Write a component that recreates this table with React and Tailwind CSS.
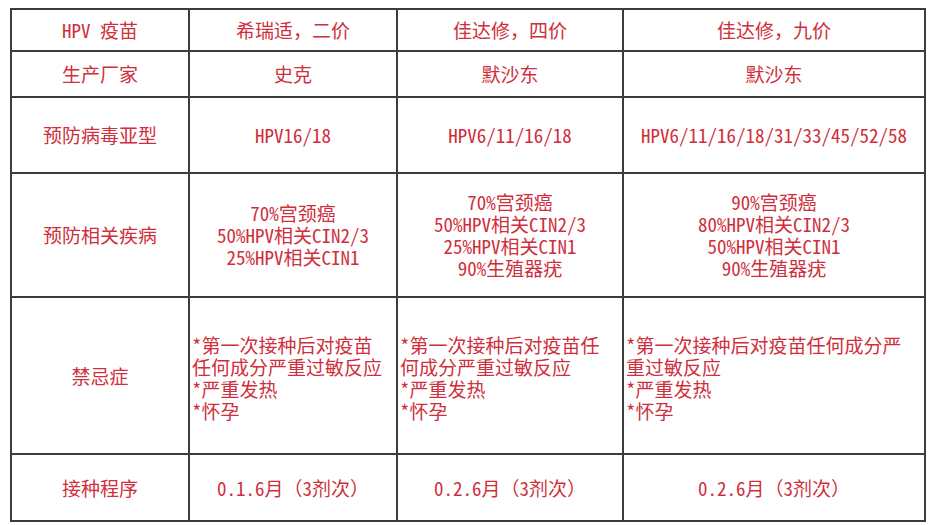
import React from 'react';

const font = {
  fontFamily: '"Noto Sans Mono CJK SC", "Liberation Mono", "Noto Sans CJK SC", monospace',
};

const rows = [
  { label: 'HPV 疫苗', cells: ['希瑞适，二价', '佳达修，四价', '佳达修，九价'] },
  { label: '生产厂家', cells: ['史克', '默沙东', '默沙东'] },
  { label: '预防病毒亚型', cells: ['HPV16/18', 'HPV6/11/16/18', 'HPV6/11/16/18/31/33/45/52/58'] },
  {
    label: '预防相关疾病',
    cells: [
      ['70%宫颈癌', '50%HPV相关CIN2/3', '25%HPV相关CIN1'],
      ['70%宫颈癌', '50%HPV相关CIN2/3', '25%HPV相关CIN1', '90%生殖器疣'],
      ['90%宫颈癌', '80%HPV相关CIN2/3', '50%HPV相关CIN1', '90%生殖器疣'],
    ],
  },
  {
    label: '禁忌症',
    left: true,
    cells: [
      ['*第一次接种后对疫苗', '任何成分严重过敏反应', '*严重发热', '*怀孕'],
      ['*第一次接种后对疫苗任', '何成分严重过敏反应', '*严重发热', '*怀孕'],
      ['*第一次接种后对疫苗任何成分严', '重过敏反应', '*严重发热', '*怀孕'],
    ],
  },
  { label: '接种程序', cells: ['0.1.6月（3剂次）', '0.2.6月（3剂次）', '0.2.6月（3剂次）'] },
];

function Cell({ content, left }) {
  const lines = Array.isArray(content) ? content : [content];
  return (
    <div
      className={
        'flex flex-col justify-center border-r-2 border-b-2 border-[#3c3c3c] ' +
        (left ? 'items-start pl-[2px] pt-1' : 'items-center text-center')
      }
    >
      {lines.map((l, i) => (
        <div key={i} className="whitespace-nowrap leading-[22px]">{l}</div>
      ))}
    </div>
  );
}

export default function App() {
  return (
    <div className="w-[935px] h-[525px] bg-white overflow-hidden pt-[8px] pl-[10px]" style={font}>
      <div className="grid grid-cols-[178px_208px_226px_302px] grid-rows-[42px_46px_76px_124px_157px_67px] w-fit border-l-2 border-t-2 border-[#3c3c3c] text-[19px] text-[#cf2f3c]">
        {rows.map((r, i) => (
          <React.Fragment key={i}>
            <Cell content={r.label} />
            {r.cells.map((c, j) => (
              <Cell key={j} content={c} left={r.left} />
            ))}
          </React.Fragment>
        ))}
      </div>
    </div>
  );
}
